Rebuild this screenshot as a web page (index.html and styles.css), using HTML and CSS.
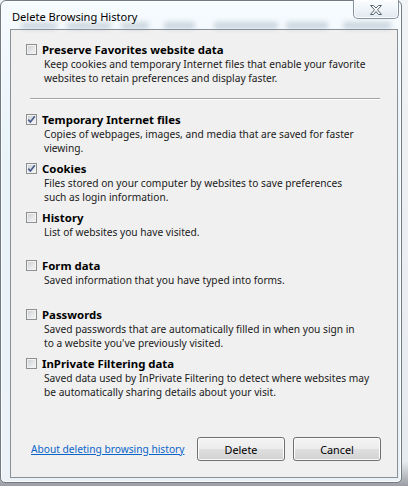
FILE: index.html
```html
<!DOCTYPE html>
<html>
<head>
<meta charset="utf-8">
<link rel="stylesheet" href="styles.css">
</head>
<body>
<div class="window">
  <div class="titlebar">
    <div class="behind">
      <i class="b1"></i><i class="b2"></i><i class="b3"></i><i class="b4"></i><i class="b5"></i><i class="b6"></i><i class="b7"></i>
    </div>
    <div class="title">Delete Browsing History</div>
    <div class="close">
      <svg width="14" height="12" viewBox="0 0 14 12"><path d="M1.5 1.5 L4.5 1.5 L7 4 L9.5 1.5 L12.5 1.5 L8.5 5.75 L12.5 10.5 L9.5 10.5 L7 7.5 L4.5 10.5 L1.5 10.5 L5.5 5.75 Z" fill="#fdfdfd" stroke="#56626e" stroke-width="1" stroke-linejoin="round"/></svg>
    </div>
  </div>
  <div class="client">
    <div class="item">
      <div class="row"><span class="cb"></span><span class="label">Preserve Favorites website data</span></div>
      <div class="desc">Keep cookies and temporary Internet files that enable your favorite<br>websites to retain preferences and display faster.</div>
    </div>
    <div class="sep"></div>
    <div class="list">
      <div class="item">
        <div class="row"><span class="cb checked"><svg width="9" height="9" viewBox="0 0 9 9"><path d="M1.3 4.6 L3.4 7 L7.8 1.2" fill="none" stroke="#4a5d8c" stroke-width="1.7"/></svg></span><span class="label">Temporary Internet files</span></div>
        <div class="desc">Copies of webpages, images, and media that are saved for faster<br>viewing.</div>
      </div>
      <div class="item">
        <div class="row"><span class="cb checked"><svg width="9" height="9" viewBox="0 0 9 9"><path d="M1.3 4.6 L3.4 7 L7.8 1.2" fill="none" stroke="#4a5d8c" stroke-width="1.7"/></svg></span><span class="label">Cookies</span></div>
        <div class="desc">Files stored on your computer by websites to save preferences<br>such as login information.</div>
      </div>
      <div class="item">
        <div class="row"><span class="cb"></span><span class="label">History</span></div>
        <div class="desc">List of websites you have visited.</div>
      </div>
      <div class="item">
        <div class="row"><span class="cb"></span><span class="label">Form data</span></div>
        <div class="desc">Saved information that you have typed into forms.</div>
      </div>
      <div class="item">
        <div class="row"><span class="cb"></span><span class="label">Passwords</span></div>
        <div class="desc">Saved passwords that are automatically filled in when you sign in<br>to a website you've previously visited.</div>
      </div>
      <div class="item">
        <div class="row"><span class="cb"></span><span class="label">InPrivate Filtering data</span></div>
        <div class="desc">Saved data used by InPrivate Filtering to detect where websites may<br>be automatically sharing details about your visit.</div>
      </div>
    </div>
    <div class="footer">
      <a class="link" href="#">About deleting browsing history</a>
      <div class="buttons">
        <div class="btn">Delete</div>
        <div class="btn">Cancel</div>
      </div>
    </div>
  </div>
</div>
</body>
</html>
```

FILE: styles.css
```css
* { box-sizing: border-box; }
html, body { margin: 0; padding: 0; }
body {
  width: 408px;
  height: 486px;
  overflow: hidden;
  background: linear-gradient(180deg, #f1f3f5 0%, #e8ebee 95%, #9a9ea2 100%);
  font-family: "Noto Sans", "Liberation Sans", sans-serif;
  color: #111;
}
.window {
  width: 402px;
  height: 483px;
  border: 1px solid #6f7a83;
  border-radius: 6px 6px 5px 5px;
  background: linear-gradient(180deg, #f6fbfe 0%, #e8f3fa 30%, #ebf2f7 100%);
  box-shadow: inset 0 0 0 1px rgba(255,255,255,0.8);
  display: flex;
  flex-direction: column;
}
.titlebar {
  position: relative;
  height: 28px;
  display: flex;
  justify-content: space-between;
  align-items: flex-start;
  padding: 0 2px 0 11px;
}
.behind {
  position: absolute;
  left: 0;
  top: 20px;
  height: 8px;
  width: 100%;
  filter: blur(2.4px);
  opacity: 0.35;
}
.behind i {
  position: absolute;
  top: 1px;
  height: 7px;
  border-radius: 3px;
  background: #7f93a6;
}
.b1 { left: 20px; width: 36px; } .b2 { left: 66px; width: 44px; } .b3 { left: 120px; width: 28px; }
.b4 { left: 163px; width: 31px; } .b5 { left: 213px; width: 64px; } .b6 { left: 285px; width: 42px; }
.b7 { left: 342px; width: 48px; }
.title {
  position: relative;
  margin-top: 8px;
  font-size: 11.1px;
  line-height: 15px;
  color: #000;
  text-shadow: 0 0 5px #fff, 0 0 9px #fff, 0 0 12px #fff;
}
.close {
  position: relative;
  margin-top: -1px;
  width: 46px;
  height: 19px;
  border: 1px solid #8592a0;
  border-top: none;
  border-radius: 0 0 5px 5px;
  background: linear-gradient(180deg, #fcfeff 0%, #eef4f8 50%, #e1e9ef 100%);
  box-shadow: inset 0 0 0 1px rgba(255,255,255,0.9);
  display: flex;
  align-items: center;
  justify-content: center;
  padding-top: 1px;
}
.client {
  flex: 1;
  margin: 0 3px 4px 9px;
  border: 1px solid #8b9096;
  background: #f0f0f0;
  display: flex;
  flex-direction: column;
  padding: 12px 16px 16px 15px;
}
.row {
  display: flex;
  align-items: center;
  height: 15px;
}
.cb {
  width: 11px;
  height: 11px;
  margin-right: 5px;
  border: 1px solid #8e8f8f;
  background: linear-gradient(135deg, #c9cdd2 0%, #e4e6e8 55%, #f7f7f7 100%);
  box-shadow: inset 0 0 0 1px #f2f2f2;
  display: flex;
  align-items: center;
  justify-content: center;
  flex: none;
}
.label {
  font-size: 11.4px;
  font-weight: bold;
  color: #000;
  white-space: nowrap;
}
.desc {
  padding-left: 18px;
  font-size: 10.2px;
  line-height: 14px;
  min-height: 28px;
  white-space: nowrap;
  color: #1a1a1a;
}
.sep {
  margin: 13px 1px 12px 4px;
  height: 2px;
  border-top: 1px solid #a3a3a3;
  border-bottom: 1px solid #ffffff;
}
.list {
  display: flex;
  flex-direction: column;
  gap: 5.8px;
}
.footer {
  margin-top: auto;
  display: flex;
  align-items: center;
  justify-content: space-between;
  padding-left: 5px;
}
.link {
  font-size: 10.2px;
  color: #0a64c8;
  text-decoration: underline;
}
.buttons {
  display: flex;
  gap: 8px;
}
.btn {
  width: 88px;
  height: 24px;
  border: 1px solid #707070;
  border-radius: 3px;
  background: linear-gradient(180deg, #f4f4f4 0%, #ececec 48%, #dfdfdf 52%, #d2d2d2 100%);
  box-shadow: inset 0 0 0 1px #fbfbfb;
  display: flex;
  align-items: center;
  justify-content: center;
  font-size: 10.8px;
  color: #000;
}
```
